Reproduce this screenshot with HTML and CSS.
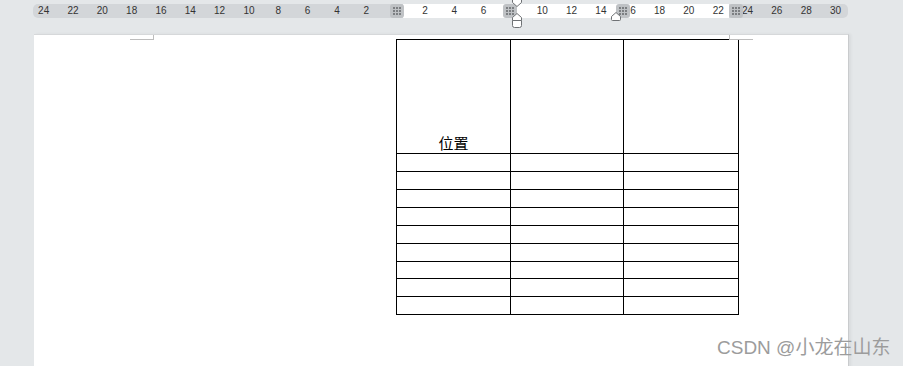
FILE: index.html
```html
<!DOCTYPE html>
<html lang="zh-CN">

<head>
  <meta charset="UTF-8">
  <title>表格 - 位置</title>
  <link rel="stylesheet" href="styles.css">
</head>

<body>

  <!-- ruler -->
  <div class="ruler">
    <div class="ruler-nums">
      <span>24</span><span>22</span><span>20</span><span>18</span><span>16</span><span>14</span>
      <span>12</span><span>10</span><span>8</span><span>6</span><span>4</span><span>2</span>
      <span></span>
      <span>2</span><span>4</span><span>6</span><span>8</span><span>10</span><span>12</span>
      <span>14</span><span>16</span><span>18</span><span>20</span><span>22</span><span>24</span>
      <span>26</span><span>28</span><span>30</span>
    </div>

    <!-- column handles -->
    <span class="handle h1"><i></i><i></i><i></i><i></i><i></i><i></i><i></i><i></i><i></i></span>
    <span class="handle h2"><i></i><i></i><i></i><i></i><i></i><i></i><i></i><i></i><i></i></span>
    <span class="handle h3"><i></i><i></i><i></i><i></i><i></i><i></i><i></i><i></i><i></i></span>
    <span class="handle h4"><i></i><i></i><i></i><i></i><i></i><i></i><i></i><i></i><i></i></span>

    <!-- indent markers -->
    <svg class="marker indent" width="12" height="28" viewBox="0 0 12 28">
      <path d="M1.5 -1 V2.5 L6 6.5 L10.5 2.5 V-1" fill="#fff" stroke="#6f7275" />
      <path d="M6 13.5 L10.5 17.5 V20.5 H1.5 V17.5 Z" fill="#fff" stroke="#6f7275" />
      <path d="M1.5 20.5 H10.5 V25.5 Q10.5 27.5 8.5 27.5 H3.5 Q1.5 27.5 1.5 25.5 Z" fill="#fff" stroke="#6f7275" />
    </svg>
    <svg class="marker hang" width="12" height="10" viewBox="0 0 12 10">
      <path d="M6 1.5 L10.5 5.5 V8.5 Q10.5 9.5 9.5 9.5 H2.5 Q1.5 9.5 1.5 8.5 V5.5 Z" fill="#fff" stroke="#6f7275" />
    </svg>
  </div>

  <!-- page -->
  <div class="page">
    <span class="corner corner-left"></span>
    <span class="corner corner-right"></span>

    <table class="grid">
      <tr class="tall">
        <td class="label">位置</td>
        <td></td>
        <td></td>
      </tr>
      <tr><td></td><td></td><td></td></tr>
      <tr><td></td><td></td><td></td></tr>
      <tr><td></td><td></td><td></td></tr>
      <tr><td></td><td></td><td></td></tr>
      <tr><td></td><td></td><td></td></tr>
      <tr><td></td><td></td><td></td></tr>
      <tr class="short"><td></td><td></td><td></td></tr>
      <tr><td></td><td></td><td></td></tr>
      <tr><td></td><td></td><td></td></tr>
    </table>
  </div>

  <div class="watermark">CSDN @小龙在山东</div>

</body>

</html>
```

FILE: styles.css
```css
/* base */
body {
  margin: 0;
  padding: 0;
  height: 366px;
  overflow: hidden;
  background-color: #e4e7e9;
  font-family: "Liberation Sans", "Noto Sans CJK SC", sans-serif;
  position: relative;
}

/* ruler */
.ruler {
  position: relative;
  margin: 4px 0 0 33px;
  width: 815px;
  height: 14px;
  border-radius: 5px;
  overflow: visible;
  background: linear-gradient(to right,
      #d3d6d9 0, #d3d6d9 370px,
      #ffffff 370px, #ffffff 696px,
      #d3d6d9 696px, #d3d6d9 100%);
}

.ruler-nums {
  display: flex;
  margin-left: -4px;
  height: 14px;
  align-items: center;
}

.ruler-nums span {
  flex: 0 0 29.33px;
  text-align: center;
  font-size: 10px;
  line-height: 14px;
  color: #333;
}

/* column handles on the ruler */
.handle {
  position: absolute;
  top: 0;
  width: 14px;
  height: 14px;
  border-radius: 3px;
  background-color: #bfc2c5;
  display: grid;
  grid-template-columns: repeat(3, 2px);
  grid-auto-rows: 2px;
  gap: 1px;
  align-content: center;
  justify-content: center;
}

.handle i {
  background-color: #7c7f82;
}

.h1 { left: 357px; }
.h2 { left: 470px; }
.h3 { left: 583px; }
.h4 { left: 696px; }

.marker {
  position: absolute;
}

.marker.indent {
  left: 478px;
  top: -4px;
}

.marker.hang {
  left: 577px;
  top: 7px;
}

/* page */
.page {
  position: relative;
  margin: 16px 0 0 34px;
  width: 814px;
  height: 340px;
  background-color: #fff;
  border-top: 1px solid #d6d8da;
  border-right: 1px solid #c9cbcd;
  box-shadow: 2px 0 3px rgba(0, 0, 0, 0.05);
}

.corner {
  position: absolute;
  top: 0;
  width: 23px;
  height: 4px;
  border-bottom: 1px solid #bdbdbd;
}

.corner-left {
  left: 96px;
  border-right: 1px solid #bdbdbd;
}

.corner-right {
  left: 695px;
  border-left: 1px solid #bdbdbd;
}

/* table */
.grid {
  border-collapse: collapse;
  margin: 4px 0 0 362px;
  table-layout: fixed;
}

.grid td {
  border: 1px solid #000;
  padding: 0;
  height: 17px;
  width: 112px;
}

.grid td:nth-child(1) { width: 113px; }
.grid td:nth-child(3) { width: 114px; }

.grid tr.tall td {
  height: 111px;
}

.grid tr.short td {
  height: 16px;
}

.grid td.label {
  vertical-align: bottom;
  text-align: center;
  font-family: "Noto Sans CJK SC", sans-serif;
  font-size: 15px;
  line-height: 16px;
  padding-bottom: 2px;
  color: #000;
}

/* watermark */
.watermark {
  position: absolute;
  left: 717px;
  top: 332px;
  font-size: 19px;
  color: #9c9c9c;
  white-space: nowrap;
}
```
